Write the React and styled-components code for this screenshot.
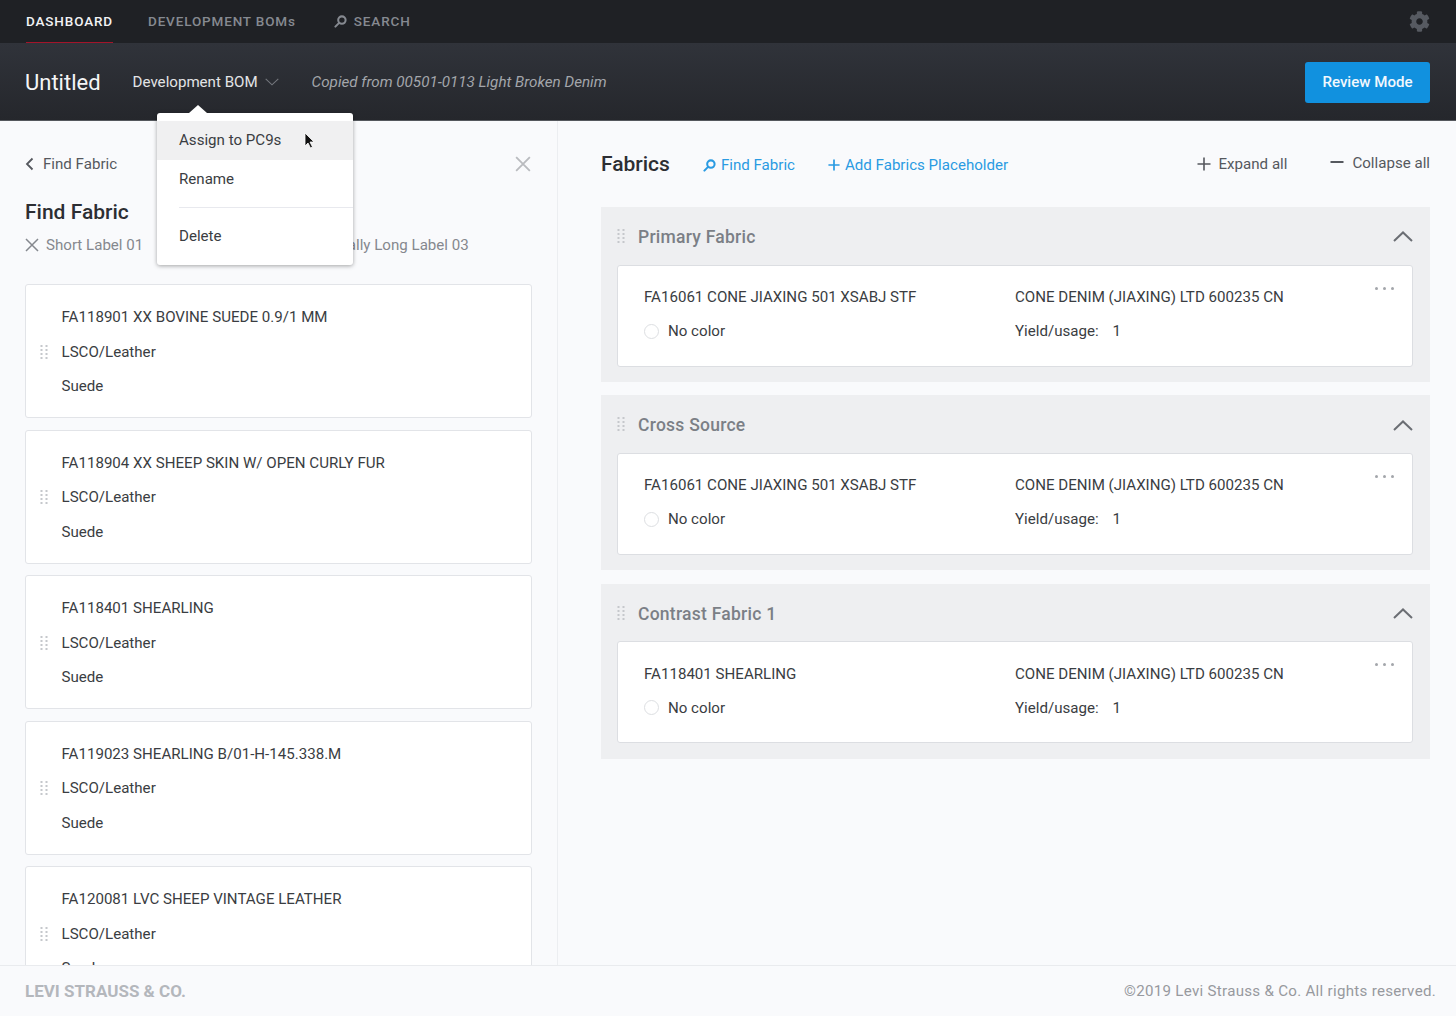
import React from 'react'
import styled, { createGlobalStyle } from 'styled-components'
import { FaCog } from 'react-icons/fa'

const GlobalStyle = createGlobalStyle`
  html, body {
    margin: 0;
    padding: 0;
    height: 1016px;
    overflow: hidden;
    background: #f9fafc;
    font-family: Roboto, "Liberation Sans", sans-serif;
    color: #3a3d42;
  }
  * { box-sizing: border-box; }
`

const Page = styled.div`
  position: relative;
  width: 1456px;
  height: 1016px;
  display: flex;
  flex-direction: column;
  overflow: hidden;
`
const TopNav = styled.nav`
  height: 43px;
  flex: none;
  display: flex;
  align-items: stretch;
  padding: 0 26px 0 26px;
  background: #1f2125;
`
const NavItem = styled.a`
  display: flex;
  align-items: center;
  gap: 7px;
  height: 43px;
  margin-right: ${p => p.$gap}px;
  font-size: 13.5px;
  font-weight: 500;
  letter-spacing: 0.85px;
  color: ${p => (p.$active ? '#f2f3f5' : '#868a91')};
  border-bottom: 1px solid ${p => (p.$active ? '#a3142a' : 'transparent')};
`
const GearButton = styled.span`
  margin-left: auto;
  display: flex;
  align-items: center;
  color: #565a61;
  font-size: 21px;
`
const SubHeader = styled.header`
  height: 78px;
  flex: none;
  display: flex;
  align-items: center;
  padding: 1px 26px 0 25px;
  background: linear-gradient(180deg, #30333a 0%, #25272c 100%);
  border-bottom: 1px solid #55585d;
`
const Title = styled.h1`
  margin: 0 32px 0 0;
  font-size: 22px;
  font-weight: 400;
  color: #f4f5f6;
`
const BomType = styled.div`
  display: flex;
  align-items: center;
  gap: 7px;
  font-size: 15.1px;
  color: #e3e4e6;
  margin-right: 33px;
`
const CopiedFrom = styled.span`
  font-size: 15.2px;
  font-style: italic;
  color: #a3a6ab;
`
const ReviewButton = styled.button`
  margin-left: auto;
  width: 125px;
  height: 41px;
  border: 0;
  border-radius: 3px;
  background: #1191df;
  color: #f2f8fd;
  font-family: inherit;
  font-size: 15.1px;
  font-weight: 500;
`
const Body = styled.main`
  flex: 1;
  min-height: 0;
  display: flex;
`
const LeftPanel = styled.section`
  width: 558px;
  flex: none;
  padding: 33px 25px 0 25px;
  border-right: 1px solid #eceef1;
  overflow: hidden;
`
const PanelTop = styled.div`
  display: flex;
  align-items: center;
  justify-content: space-between;
  height: 20px;
  padding-right: 1px;
  font-size: 15.1px;
  color: #55585e;
`
const BackLink = styled.span`
  display: flex;
  align-items: center;
  gap: 9px;
`
const CloseIcon = styled.span`
  display: flex;
  color: #b9bbbf;
`
const PanelTitle = styled.h2`
  margin: 24px 0 0;
  font-size: 21px;
  line-height: 28px;
  font-weight: 500;
  color: #2c2e33;
`
const Chips = styled.div`
  display: flex;
  gap: 24px;
  margin-top: 9px;
  margin-bottom: 29px;
  height: 20px;
`
const Chip = styled.span`
  display: flex;
  align-items: center;
  gap: 7px;
  font-size: 15.1px;
  color: #85888e;
  white-space: nowrap;
`
const MaterialList = styled.div`
  display: flex;
  flex-direction: column;
  gap: 11.6px;
`
const MaterialCard = styled.article`
  position: relative;
  height: 134px;
  flex: none;
  display: grid;
  grid-template-columns: 35.5px 1fr;
  align-items: center;
  background: #fff;
  border: 1px solid #e2e4e8;
  border-radius: 3px;
`
const HandleCell = styled.div`
  display: flex;
  justify-content: flex-end;
  padding: 3px 13px 0 0;
  color: #c5c8cc;
`
const MaterialLines = styled.div`
  display: flex;
  flex-direction: column;
  gap: 14.5px;
  padding-top: 1px;
`
const Line = styled.div`
  font-size: 15.1px;
  line-height: 20px;
  color: #3a3d42;
  white-space: nowrap;
`
const RightPanel = styled.section`
  flex: 1;
  padding: 32px 26px 0 43px;
`
const FabricsBar = styled.div`
  display: flex;
  align-items: center;
  height: 24px;
  margin-bottom: 30px;
`
const FabricsTitle = styled.h2`
  margin: 0 33px 2px 0;
  font-size: 21px;
  font-weight: 500;
  color: #2c2e33;
`
const BlueLink = styled.a`
  display: flex;
  align-items: center;
  gap: 5px;
  margin-right: 33px;
  font-size: 15.1px;
  color: #2a9be2;
`
const BarActions = styled.div`
  margin-left: auto;
  display: flex;
  align-items: center;
  gap: 43px;
`
const BarAction = styled.span`
  display: flex;
  align-items: center;
  gap: 8px;
  padding-bottom: ${p => p.$lift}px;
  font-size: 15.1px;
  color: #55585e;
`
const Groups = styled.div`
  display: flex;
  flex-direction: column;
  gap: 13.4px;
`
const FabricGroup = styled.div`
  padding: 0 17px 15.5px 16px;
  background: #eeeff1;
`
const GroupHeader = styled.div`
  height: 57.5px;
  padding-top: 2px;
  display: flex;
  align-items: center;
  gap: 12px;
  color: #c5c8cc;
`
const GroupName = styled.h3`
  flex: 1;
  margin: 0;
  font-size: 17.5px;
  font-weight: 500;
  letter-spacing: 0.25px;
  color: #7b7f86;
`
const FabricCard = styled.article`
  position: relative;
  height: 102px;
  padding: 21.5px 26px;
  display: grid;
  grid-template-columns: 371px 1fr;
  row-gap: 14px;
  align-content: start;
  background: #fff;
  border: 1px solid #dcdee2;
  border-radius: 3px;
`
const ColorRow = styled.div`
  display: flex;
  align-items: center;
  gap: 9px;
`
const Swatch = styled.span`
  width: 15px;
  height: 15px;
  border-radius: 50%;
  background: #fff;
  border: 1px solid #dddfe2;
`
const Yield = styled(Line)`
  display: flex;
  gap: 14px;
`
const MoreDots = styled.span`
  position: absolute;
  top: 21px;
  right: 18px;
  display: flex;
  gap: 5px;
  & > i {
    width: 3px;
    height: 3px;
    border-radius: 50%;
    background: #a3a6ab;
  }
`
const Footer = styled.footer`
  height: 51px;
  flex: none;
  display: flex;
  align-items: center;
  justify-content: space-between;
  padding: 0 20px 0 25px;
  background: #f9fafc;
  border-top: 1px solid #e9ebee;
`
const Brand = styled.span`
  font-size: 17px;
  font-weight: 700;
  color: #b4b7bc;
`
const Copyright = styled.span`
  font-size: 15.1px;
  letter-spacing: 0.29px;
  color: #97999e;
`
const Menu = styled.div`
  position: absolute;
  left: 157px;
  top: 113px;
  width: 196px;
  height: 152px;
  padding-top: 8px;
  background: #fff;
  border-radius: 3px;
  box-shadow: 0 1px 4px rgba(0, 0, 0, 0.35);
  &::before {
    content: '';
    position: absolute;
    left: 32px;
    top: -8px;
    border-left: 9px solid transparent;
    border-right: 9px solid transparent;
    border-bottom: 8px solid #fff;
  }
`
const MenuItem = styled.div`
  height: 39px;
  display: flex;
  align-items: center;
  padding: 0 0 2px 22px;
  font-size: 15.1px;
  color: #3a3d42;
  background: ${p => (p.$hover ? '#f0f0f1' : 'transparent')};
`
const MenuDivider = styled.hr`
  margin: 8px 0 9px 22px;
  border: 0;
  border-top: 1px solid #e8e9ee;
`
const Pointer = styled.svg`
  position: absolute;
  left: 147px;
  top: 19px;
`

const DragHandle = () => (
  <svg width="9" height="16" viewBox="0 0 9 16" fill="currentColor">
    {[1, 5, 9, 13].flatMap(y => [1.5, 6.5].map(x => <rect key={`${x}-${y}`} x={x - 1} y={y - 1} width="2" height="2" />))}
  </svg>
)
const SearchGlyph = ({ size = 13 }) => (
  <svg width={size} height={size} viewBox="0 0 14 14" fill="none" stroke="currentColor" strokeWidth="2.2">
    <circle cx="8.5" cy="5.5" r="4" />
    <path d="M5.500 8.500 1.500 12.500" strokeLinecap="round" />
  </svg>
)
const Cross = ({ size = 14, weight = 1.5 }) => (
  <svg width={size} height={size} viewBox="0 0 14 14" fill="none" stroke="currentColor" strokeWidth={weight}>
    <path d="M1 1 13 13M13 1 1 13" />
  </svg>
)
const Chevron = ({ width, height, weight = 2, up, color = 'currentColor' }) => (
  <svg width={width} height={height} viewBox="0 0 20 11" fill="none" stroke={color} strokeWidth={weight}>
    <path d={up ? 'M1 10 10 1.5 19 10' : 'M1 1 10 9.5 19 1'} />
  </svg>
)
const Plus = ({ size = 14, weight = 2 }) => (
  <svg width={size} height={size} viewBox="0 0 14 14" fill="none" stroke="currentColor" strokeWidth={weight}>
    <path d="M7 0.5V13.5M0.5 7H13.5" />
  </svg>
)

const materials = [
  'FA118901 XX BOVINE SUEDE 0.9/1 MM',
  'FA118904 XX SHEEP SKIN W/ OPEN CURLY FUR',
  'FA118401 SHEARLING',
  'FA119023 SHEARLING B/01-H-145.338.M',
  'FA120081 LVC SHEEP VINTAGE LEATHER',
]

const fabricGroups = [
  { name: 'Primary Fabric', fabric: 'FA16061 CONE JIAXING 501 XSABJ STF' },
  { name: 'Cross Source', fabric: 'FA16061 CONE JIAXING 501 XSABJ STF' },
  { name: 'Contrast Fabric 1', fabric: 'FA118401 SHEARLING' },
]

export default function App() {
  return (
    <Page>
      <GlobalStyle />
      <TopNav>
        <NavItem $active $gap={35}>DASHBOARD</NavItem>
        <NavItem $gap={38}>DEVELOPMENT BOMs</NavItem>
        <NavItem $gap={0}><SearchGlyph />SEARCH</NavItem>
        <GearButton><FaCog /></GearButton>
      </TopNav>
      <SubHeader>
        <Title>Untitled</Title>
        <BomType>Development BOM <Chevron width={14} height={8} weight={1.6} color="#74777d" /></BomType>
        <CopiedFrom>Copied from 00501-0113 Light Broken Denim</CopiedFrom>
        <ReviewButton>Review Mode</ReviewButton>
      </SubHeader>
      <Body>
        <LeftPanel>
          <PanelTop>
            <BackLink>
              <svg width="9" height="14" viewBox="0 0 9 14" fill="none" stroke="#55585e" strokeWidth="1.8"><path d="M7.5 1.5 2 7l5.5 5.5" /></svg>
              Find Fabric
            </BackLink>
            <CloseIcon><Cross size={16} weight={1.6} /></CloseIcon>
          </PanelTop>
          <PanelTitle>Find Fabric</PanelTitle>
          <Chips>
            <Chip><Cross /> Short Label 01</Chip>
            <Chip><Cross /> Short Label 02</Chip>
            <Chip><Cross /> Really Long Label 03</Chip>
          </Chips>
          <MaterialList>
            {materials.map(name => (
              <MaterialCard key={name}>
                <HandleCell><DragHandle /></HandleCell>
                <MaterialLines>
                  <Line>{name}</Line>
                  <Line>LSCO/Leather</Line>
                  <Line>Suede</Line>
                </MaterialLines>
              </MaterialCard>
            ))}
          </MaterialList>
        </LeftPanel>
        <RightPanel>
          <FabricsBar>
            <FabricsTitle>Fabrics</FabricsTitle>
            <BlueLink><SearchGlyph />Find Fabric</BlueLink>
            <BlueLink><Plus size={12} />Add Fabrics Placeholder</BlueLink>
            <BarActions>
              <BarAction $lift={2}><Plus size={14} weight={1.6} />Expand all</BarAction>
              <BarAction $lift={4}>
                <svg width="14" height="14" viewBox="0 0 14 14" stroke="currentColor" strokeWidth="2"><path d="M0.5 6H13.5" /></svg>
                Collapse all
              </BarAction>
            </BarActions>
          </FabricsBar>
          <Groups>
            {fabricGroups.map(group => (
              <FabricGroup key={group.name}>
                <GroupHeader>
                  <DragHandle />
                  <GroupName>{group.name}</GroupName>
                  <Chevron up width={20} height={11} color="#6b6e74" />
                </GroupHeader>
                <FabricCard>
                  <Line>{group.fabric}</Line>
                  <Line>CONE DENIM (JIAXING) LTD 600235 CN</Line>
                  <ColorRow><Swatch /><Line>No color</Line></ColorRow>
                  <Yield><span>Yield/usage:</span><span>1</span></Yield>
                  <MoreDots><i /><i /><i /></MoreDots>
                </FabricCard>
              </FabricGroup>
            ))}
          </Groups>
        </RightPanel>
      </Body>
      <Footer>
        <Brand>LEVI STRAUSS &amp; CO.</Brand>
        <Copyright>©2019 Levi Strauss &amp; Co. All rights reserved.</Copyright>
      </Footer>
      <Menu>
        <MenuItem $hover>Assign to PC9s</MenuItem>
        <MenuItem>Rename</MenuItem>
        <MenuDivider />
        <MenuItem>Delete</MenuItem>
        <Pointer width="12" height="17" viewBox="0 0 12 17">
          <path d="M1 1v13l3-3 2.500 5 2-1-2.500-5H10z" fill="#111" stroke="#fff" strokeWidth="0.8" />
        </Pointer>
      </Menu>
    </Page>
  )
}
